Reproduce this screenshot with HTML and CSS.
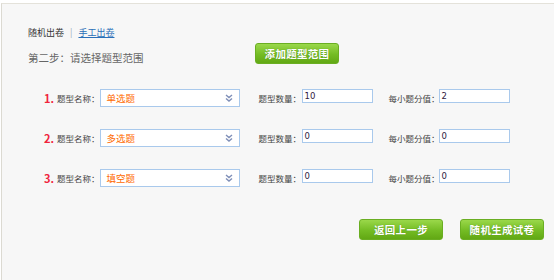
FILE: index.html
```html
<!DOCTYPE html>
<html lang="zh-CN">
<head>
    <meta charset="UTF-8">
    <title>出卷</title>
    <link rel="stylesheet" href="styles.css">
</head>
<body>
    <div class="panel">
        <div class="tabs">
            <span class="tab">随机出卷</span>
            <span class="sep">|</span>
            <a class="tab link" href="#">手工出卷</a>
        </div>
        <div class="step">
            <span class="step-title">第二步：请选择题型范围</span>
            <button class="btn">添加题型范围</button>
        </div>

        <div class="row">
            <span class="num">1.</span>
            <span class="label">题型名称：</span>
            <div class="select"><span>单选题</span><svg class="arrow" viewBox="0 0 8 8"><path d="M1 1 L4 3.5 L7 1 M1 4.5 L4 7 L7 4.5" fill="none" stroke="#7f8fb8" stroke-width="1.4"/></svg></div>
            <span class="label label-count">题型数量：</span>
            <div class="input">10</div>
            <span class="label label-score">每小题分值：</span>
            <div class="input">2</div>
        </div>
        <div class="row">
            <span class="num">2.</span>
            <span class="label">题型名称：</span>
            <div class="select"><span>多选题</span><svg class="arrow" viewBox="0 0 8 8"><path d="M1 1 L4 3.5 L7 1 M1 4.5 L4 7 L7 4.5" fill="none" stroke="#7f8fb8" stroke-width="1.4"/></svg></div>
            <span class="label label-count">题型数量：</span>
            <div class="input">0</div>
            <span class="label label-score">每小题分值：</span>
            <div class="input">0</div>
        </div>
        <div class="row">
            <span class="num">3.</span>
            <span class="label">题型名称：</span>
            <div class="select"><span>填空题</span><svg class="arrow" viewBox="0 0 8 8"><path d="M1 1 L4 3.5 L7 1 M1 4.5 L4 7 L7 4.5" fill="none" stroke="#7f8fb8" stroke-width="1.4"/></svg></div>
            <span class="label label-count">题型数量：</span>
            <div class="input">0</div>
            <span class="label label-score">每小题分值：</span>
            <div class="input">0</div>
        </div>

        <div class="actions">
            <button class="btn">返回上一步</button>
            <button class="btn">随机生成试卷</button>
        </div>
    </div>
</body>
</html>
```

FILE: styles.css
```css
html, body {
    height: 100%;
}
body {
    margin: 0;
    background-color: #fff;
    font-family: "Noto Sans CJK SC", "DejaVu Sans", sans-serif;
    color: #555;
}
.panel {
    box-sizing: border-box;
    height: calc(100% - 3px);
    margin: 3px 0 0 1px;
    padding: 21px 0 0 26px;
    background-color: #f7f7f7;
    border-top: 1px solid #e4e2da;
    border-left: 1px solid #dcdad2;
}
.tabs {
    display: flex;
    align-items: center;
    height: 14px;
    font-size: 9px;
    color: #333;
}
.sep {
    margin: 0 6px 0 6px;
    color: #9ab;
    font-size: 9px;
}
.link {
    color: #2a6fb8;
    text-decoration: underline;
}
.step {
    display: flex;
    align-items: flex-start;
    margin-top: 4px;
}
.step-title {
    width: 227px;
    margin-top: 8px;
    font-size: 10.5px;
    line-height: 14px;
    color: #666;
}
.btn {
    width: 84px;
    height: 21px;
    padding: 0;
    border: 1px solid #6aae22;
    border-radius: 3px;
    background: linear-gradient(#9ad84a, #74bc24 55%, #62a814);
    color: #fff;
    font-family: "Noto Sans CJK SC", sans-serif;
    font-size: 10.5px;
    font-weight: bold;
    letter-spacing: 0.3px;
    text-shadow: 0 0 1px #4a8a10;
    cursor: pointer;
}
.row {
    display: flex;
    align-items: flex-start;
    height: 40px;
    padding-left: 16px;
    white-space: nowrap;
}
.step + .row {
    margin-top: 24px;
}
.num {
    width: 13px;
    line-height: 18px;
    font-size: 11px;
    font-weight: bold;
    color: #f0243c;
}
.label {
    line-height: 18px;
    font-size: 8.5px;
    color: #444;
}
.row .label:first-of-type {
    width: 42px;
}
.select {
    box-sizing: border-box;
    display: flex;
    align-items: center;
    justify-content: space-between;
    width: 140px;
    height: 18px;
    padding: 0 6px 0 6px;
    background-color: #fff;
    border: 1px solid #a9c9ec;
    font-size: 9.5px;
    color: #ff6a00;
}
.arrow {
    width: 8px;
    height: 8px;
}
.label-count {
    width: 43px;
    margin-left: 19px;
}
.label-score {
    width: 50px;
    margin-left: 16px;
}
.input {
    box-sizing: border-box;
    width: 71px;
    height: 14px;
    padding-left: 2px;
    background-color: #fff;
    border: 1px solid #a9c9ec;
    font-family: "DejaVu Sans", sans-serif;
    font-size: 8.5px;
    line-height: 12px;
    color: #302040;
}
.actions {
    display: flex;
    gap: 17px;
    margin: 10px 0 0 331px;
}
```
